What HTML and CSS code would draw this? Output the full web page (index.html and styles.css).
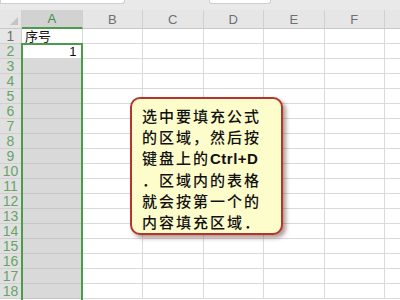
FILE: index.html
```html
<!DOCTYPE html>
<html lang="zh-CN">
<head>
  <meta charset="UTF-8" />
  <title>填充区域</title>
  <link rel="stylesheet" href="styles.css">
</head>
<body>
  <div class="topbar">
    <div class="name-box"></div>
    <div class="formula-box"></div>
  </div>

  <div class="sheet" id="sheet"></div>

  <div class="selection"></div>

  <div class="callout">
    <div class="line">选中要填充公式</div>
    <div class="line">的区域，然后按</div>
    <div class="line">键盘上的<b>Ctrl+D</b></div>
    <div class="line">．区域内的表格</div>
    <div class="line">就会按第一个的</div>
    <div class="line">内容填充区域．</div>
  </div>

<script>
  const cols = ['A', 'B', 'C', 'D', 'E', 'F', ''];
  const sheet = document.getElementById('sheet');

  function cell(cls, text) {
    const d = document.createElement('div');
    d.className = cls;
    if (text) d.textContent = text;
    sheet.appendChild(d);
  }

  cell('corner');
  cols.forEach(c => cell(c === 'A' ? 'col-head active' : 'col-head', c));

  for (let r = 1; r <= 18; r++) {
    cell(r >= 2 ? 'row-head sel' : 'row-head', String(r));
    cols.forEach(c => {
      if (c === 'A' && r === 1) cell('cell', '序号');
      else if (c === 'A' && r === 2) cell('cell num', '1');
      else if (c === 'A') cell('cell filled');
      else cell('cell');
    });
  }
</script>
</body>
</html>
```

FILE: styles.css
```css
body {
  margin: 0;
  width: 400px;
  height: 300px;
  overflow: hidden;
  background: #fff;
  font-family: "Liberation Sans", "Noto Sans CJK SC", sans-serif;
  position: relative;
}

.topbar {
  height: 10px;
  background: #e9e9e9;
  display: flex;
  gap: 84px;
}

.name-box {
  width: 123px;
  height: 3px;
  background: #fff;
  border: 1px solid #cfcfcf;
  border-top: none;
  border-radius: 0 0 3px 0;
}

.formula-box {
  width: 60px;
  height: 3px;
  background: #fff;
  border: 1px solid #cfcfcf;
  border-top: none;
  border-radius: 0 0 3px 3px;
}

.sheet {
  display: grid;
  grid-template-columns: 22px repeat(7, 60.5px);
  grid-template-rows: 19px;
  grid-auto-rows: 15px;
}

.corner {
  background: #e6e6e6;
  border-right: 1px solid #d0d0d0;
  border-bottom: 1px solid #c8c8c8;
  position: relative;
}

.corner::after {
  content: "";
  position: absolute;
  right: 3px;
  bottom: 3px;
  border-left: 8px solid transparent;
  border-bottom: 8px solid #c4c4c4;
}

.col-head {
  background: #e6e6e6;
  color: #707070;
  font-size: 13px;
  display: flex;
  align-items: center;
  justify-content: center;
  border-right: 1px solid #d0d0d0;
  border-bottom: 1px solid #c8c8c8;
}

.col-head.active {
  background: #d2d2d2;
  color: #3f8f46;
  border-bottom: 2px solid #4b9b4b;
}

.row-head {
  background: #e6e6e6;
  color: #707070;
  font-size: 14px;
  display: flex;
  align-items: center;
  justify-content: center;
  border-right: 1px solid #d0d0d0;
  border-bottom: 1px solid #d0d0d0;
}

.row-head.sel {
  background: #e0e0e0;
  color: #66a468;
}

.cell {
  border-right: 1px solid #dadada;
  border-bottom: 1px solid #dadada;
  font-size: 13px;
  line-height: 15px;
  padding: 0 3px;
  white-space: nowrap;
  color: #111;
}

.cell.num {
  text-align: right;
  padding-right: 5px;
}

.cell.filled {
  background: #d9d9d9;
  border-bottom-color: #c6c6c6;
}

.selection {
  position: absolute;
  left: 21px;
  top: 43px;
  width: 62px;
  height: 270px;
  border: 2px solid #4b9b4b;
  box-sizing: border-box;
}

.callout {
  position: absolute;
  left: 130px;
  top: 97px;
  width: 153px;
  height: 138px;
  box-sizing: border-box;
  padding: 6px 0 0 10px;
  background: #fdfccb;
  border: 2px solid #b3362e;
  border-radius: 10px;
  box-shadow: 3px 3px 4px rgba(80, 30, 20, 0.45);
  font-family: "Noto Sans CJK SC", sans-serif;
  font-size: 15px;
  font-weight: 500;
  line-height: 21px;
  letter-spacing: 2px;
  color: #111;
}

.callout .line {
  white-space: nowrap;
}

.callout b {
  font-family: "Liberation Sans", sans-serif;
  font-weight: bold;
  letter-spacing: 0.5px;
}
```
